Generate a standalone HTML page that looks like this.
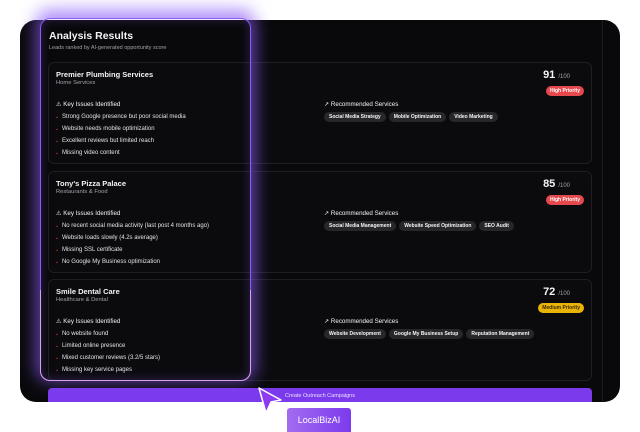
<!DOCTYPE html>
<html><head><style>
*{margin:0;padding:0;box-sizing:border-box}
body{width:640px;height:432px;background:#fff;position:relative;overflow:hidden;font-family:"Liberation Sans",sans-serif}
.panel{position:absolute;left:20px;top:20px;width:600px;height:382px;background:#09090b;border-radius:16px;overflow:hidden}
.vline{position:absolute;left:582px;top:0;bottom:0;width:1px;background:#1c1c20}
.card{position:absolute;left:28px;width:544px;height:102px;border:1px solid #1f1f23;border-radius:6px;background:#0b0b0e}
.t{position:absolute;color:#f4f4f5}
.name{left:7px;top:7px;font-size:7.5px;font-weight:bold}
.cat{left:7px;top:17px;font-size:5.8px;color:#a1a1aa}
.ki{left:7px;top:38px;font-size:6.2px}
.li{position:absolute;left:7px;font-size:6px;color:#e4e4e7}
.li b{color:#ef4444;margin-right:4px;font-size:7px}
.rs{left:275px;top:38px;font-size:6.2px}
.tags{position:absolute;left:275px;top:49px;display:flex;gap:3px}
.tag{background:#27272a;color:#f4f4f5;font-size:5px;font-weight:bold;padding:2px 5px;border-radius:5px}
.score{right:21px;top:6px;font-size:11px;font-weight:bold}
.score span{font-size:6px;font-weight:normal;color:#a1a1aa;margin-left:3px}
.pri{position:absolute;right:7px;top:23px;font-size:5px;font-weight:bold;color:#fff;background:#e5484d;padding:2px 4px;border-radius:5px}
.btn{position:absolute;left:28px;top:368px;width:544px;height:18px;background:#7c3aed;border-radius:4px;color:#e9e2ff;font-size:5.5px;text-align:center;line-height:16px}
.hl{position:absolute;left:40px;top:18px;width:211px;height:363px;border:1.5px solid #8b5cf6;border-radius:10px;box-shadow:0 -4px 16px 5px rgba(139,92,246,.65),inset 0 0 10px rgba(139,92,246,.3)}
.hl2{position:absolute;left:40px;top:290px;width:211px;height:91px;border:1.5px solid #d8a0e8;border-top:none;border-radius:0 0 10px 10px}
.lab{position:absolute;left:287px;top:408px;width:64px;height:24px;background:linear-gradient(90deg,#a26cf0,#7c3aed);color:#fff;font-size:9px;text-align:center;line-height:24px;border-radius:3px 3px 0 0}
</style></head><body>
<div class="panel">
<div class="vline"></div>
<div class="t" style="left:29px;top:10px;font-size:10.5px;font-weight:bold">Analysis Results</div>
<div class="t" style="left:29px;top:25px;font-size:5.5px;color:#a1a1aa">Leads ranked by AI-generated opportunity score</div>

<div class="card" style="top:42px">
<div class="t name">Premier Plumbing Services</div><div class="t cat">Home Services</div>
<div class="t ki">⚠ Key Issues Identified</div>
<div class="li" style="top:50px"><b>.</b>Strong Google presence but poor social media</div>
<div class="li" style="top:62px"><b>.</b>Website needs mobile optimization</div>
<div class="li" style="top:74px"><b>.</b>Excellent reviews but limited reach</div>
<div class="li" style="top:86px"><b>.</b>Missing video content</div>
<div class="t rs">↗ Recommended Services</div>
<div class="tags"><span class="tag">Social Media Strategy</span><span class="tag">Mobile Optimization</span><span class="tag">Video Marketing</span></div>
<div class="t score">91<span>/100</span></div><div class="pri">High Priority</div>
</div>

<div class="card" style="top:151px">
<div class="t name">Tony's Pizza Palace</div><div class="t cat">Restaurants &amp; Food</div>
<div class="t ki">⚠ Key Issues Identified</div>
<div class="li" style="top:50px"><b>.</b>No recent social media activity (last post 4 months ago)</div>
<div class="li" style="top:62px"><b>.</b>Website loads slowly (4.2s average)</div>
<div class="li" style="top:74px"><b>.</b>Missing SSL certificate</div>
<div class="li" style="top:86px"><b>.</b>No Google My Business optimization</div>
<div class="t rs">↗ Recommended Services</div>
<div class="tags"><span class="tag">Social Media Management</span><span class="tag">Website Speed Optimization</span><span class="tag">SEO Audit</span></div>
<div class="t score">85<span>/100</span></div><div class="pri">High Priority</div>
</div>

<div class="card" style="top:259px">
<div class="t name">Smile Dental Care</div><div class="t cat">Healthcare &amp; Dental</div>
<div class="t ki">⚠ Key Issues Identified</div>
<div class="li" style="top:50px"><b>.</b>No website found</div>
<div class="li" style="top:62px"><b>.</b>Limited online presence</div>
<div class="li" style="top:74px"><b>.</b>Mixed customer reviews (3.2/5 stars)</div>
<div class="li" style="top:86px"><b>.</b>Missing key service pages</div>
<div class="t rs">↗ Recommended Services</div>
<div class="tags"><span class="tag">Website Development</span><span class="tag">Google My Business Setup</span><span class="tag">Reputation Management</span></div>
<div class="t score">72<span>/100</span></div><div class="pri" style="background:#eab308;color:#3a2a00">Medium Priority</div>
</div>

<div class="btn">Create Outreach Campaigns</div>
</div>
<div class="hl"></div>
<div class="hl2"></div>
<svg style="position:absolute;left:256px;top:385px" width="30" height="30" viewBox="0 0 30 30"><path d="M3 3 L25 15 L15 17 L10 28 Z" fill="#8b3cf0" stroke="#fff" stroke-width="1.5" stroke-linejoin="round"/></svg>
<div class="lab">LocalBizAI</div>
</body></html>
